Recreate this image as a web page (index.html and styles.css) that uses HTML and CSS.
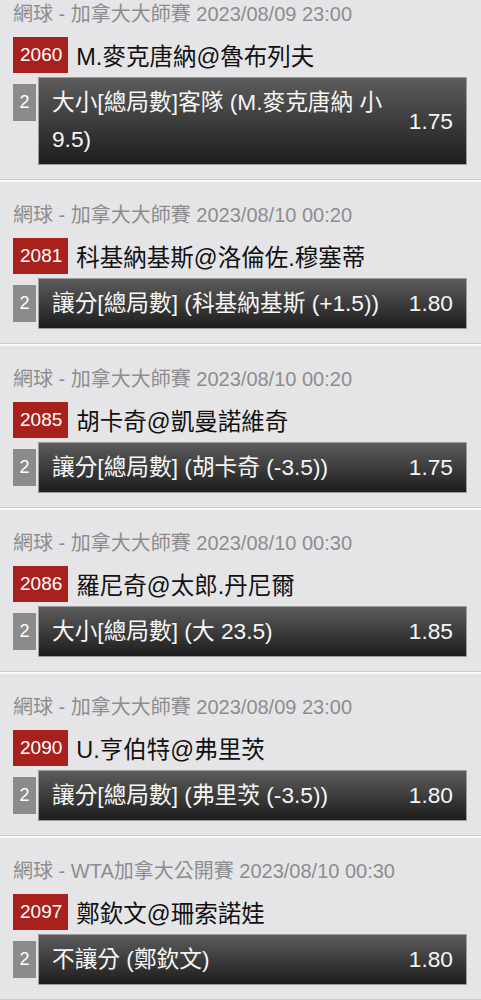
FILE: index.html
```html
<!DOCTYPE html>
<html lang="zh-Hant">
<head>
  <meta charset="UTF-8">
  <meta name="viewport" content="width=device-width, initial-scale=1.0">
  <title>投注記錄</title>
  <link rel="stylesheet" href="styles.css">
</head>
<body>
  <div class="bet-list">

    <div class="bet-card">
      <div class="bet-league">網球 - 加拿大大師賽 2023/08/09 23:00</div>
      <div class="bet-match">
        <span class="match-no">2060</span>
        <span class="match-name">M.麥克唐納@魯布列夫</span>
      </div>
      <div class="bet-row">
        <span class="bet-pass">2</span>
        <div class="bet-box">
          <span class="bet-type">大小[總局數]客隊 (M.麥克唐納 小 9.5)</span>
          <span class="bet-odds">1.75</span>
        </div>
      </div>
    </div>

    <div class="bet-card">
      <div class="bet-league">網球 - 加拿大大師賽 2023/08/10 00:20</div>
      <div class="bet-match">
        <span class="match-no">2081</span>
        <span class="match-name">科基納基斯@洛倫佐.穆塞蒂</span>
      </div>
      <div class="bet-row">
        <span class="bet-pass">2</span>
        <div class="bet-box">
          <span class="bet-type">讓分[總局數] (科基納基斯 (+1.5))</span>
          <span class="bet-odds">1.80</span>
        </div>
      </div>
    </div>

    <div class="bet-card">
      <div class="bet-league">網球 - 加拿大大師賽 2023/08/10 00:20</div>
      <div class="bet-match">
        <span class="match-no">2085</span>
        <span class="match-name">胡卡奇@凱曼諾維奇</span>
      </div>
      <div class="bet-row">
        <span class="bet-pass">2</span>
        <div class="bet-box">
          <span class="bet-type">讓分[總局數] (胡卡奇 (-3.5))</span>
          <span class="bet-odds">1.75</span>
        </div>
      </div>
    </div>

    <div class="bet-card">
      <div class="bet-league">網球 - 加拿大大師賽 2023/08/10 00:30</div>
      <div class="bet-match">
        <span class="match-no">2086</span>
        <span class="match-name">羅尼奇@太郎.丹尼爾</span>
      </div>
      <div class="bet-row">
        <span class="bet-pass">2</span>
        <div class="bet-box">
          <span class="bet-type">大小[總局數] (大 23.5)</span>
          <span class="bet-odds">1.85</span>
        </div>
      </div>
    </div>

    <div class="bet-card">
      <div class="bet-league">網球 - 加拿大大師賽 2023/08/09 23:00</div>
      <div class="bet-match">
        <span class="match-no">2090</span>
        <span class="match-name">U.亨伯特@弗里茨</span>
      </div>
      <div class="bet-row">
        <span class="bet-pass">2</span>
        <div class="bet-box">
          <span class="bet-type">讓分[總局數] (弗里茨 (-3.5))</span>
          <span class="bet-odds">1.80</span>
        </div>
      </div>
    </div>

    <div class="bet-card">
      <div class="bet-league">網球 - WTA加拿大公開賽 2023/08/10 00:30</div>
      <div class="bet-match">
        <span class="match-no">2097</span>
        <span class="match-name">鄭欽文@珊索諾娃</span>
      </div>
      <div class="bet-row">
        <span class="bet-pass">2</span>
        <div class="bet-box">
          <span class="bet-type">不讓分 (鄭欽文)</span>
          <span class="bet-odds">1.80</span>
        </div>
      </div>
    </div>

  </div>
</body>
</html>
```

FILE: styles.css
```css
body {
  margin: 0;
  padding: 0;
  background-color: #e5e5e7;
  font-family: "Liberation Sans", "Noto Sans CJK TC", sans-serif;
  overflow: hidden;
}

/* page is scrolled a little, first card is cut at the top */
.bet-list {
  margin-top: -21px;
}

.bet-card {
  padding: 18px 14px 14px 13px;
  border-top: 2px solid #fbfbfb;
  border-bottom: 1px solid #cbcbcd;
}

.bet-league {
  font-size: 20px;
  line-height: 30px;
  color: #8d8d8f;
  white-space: nowrap;
}

.bet-match {
  display: flex;
  align-items: center;
  gap: 8px;
  margin-top: 8px;
}

.match-no {
  background-color: #a9211c;
  color: #fff;
  font-size: 19px;
  line-height: 36px;
  height: 36px;
  padding: 0 6px 0 7px;
}

.match-name {
  font-size: 23.5px;
  color: #111;
}

.bet-row {
  display: flex;
  align-items: flex-start;
  gap: 2px;
  margin-top: 4px;
}

.bet-pass {
  flex: none;
  width: 23px;
  height: 37px;
  line-height: 37px;
  margin-top: 7px;
  text-align: center;
  background-color: #8b8b8b;
  color: #fff;
  font-size: 18px;
}

.bet-box {
  flex: 1;
  display: flex;
  align-items: center;
  padding: 6px 13px 6px 13px;
  border: 1px solid #9c9c9c;
  background: linear-gradient(#5c5c5c, #1d1d1d);
  color: #f6f6f6;
  font-size: 22.7px;
  line-height: 37px;
}

.bet-type {
  flex: 1;
}

.bet-odds {
  flex: none;
  margin-left: 8px;
}
```
